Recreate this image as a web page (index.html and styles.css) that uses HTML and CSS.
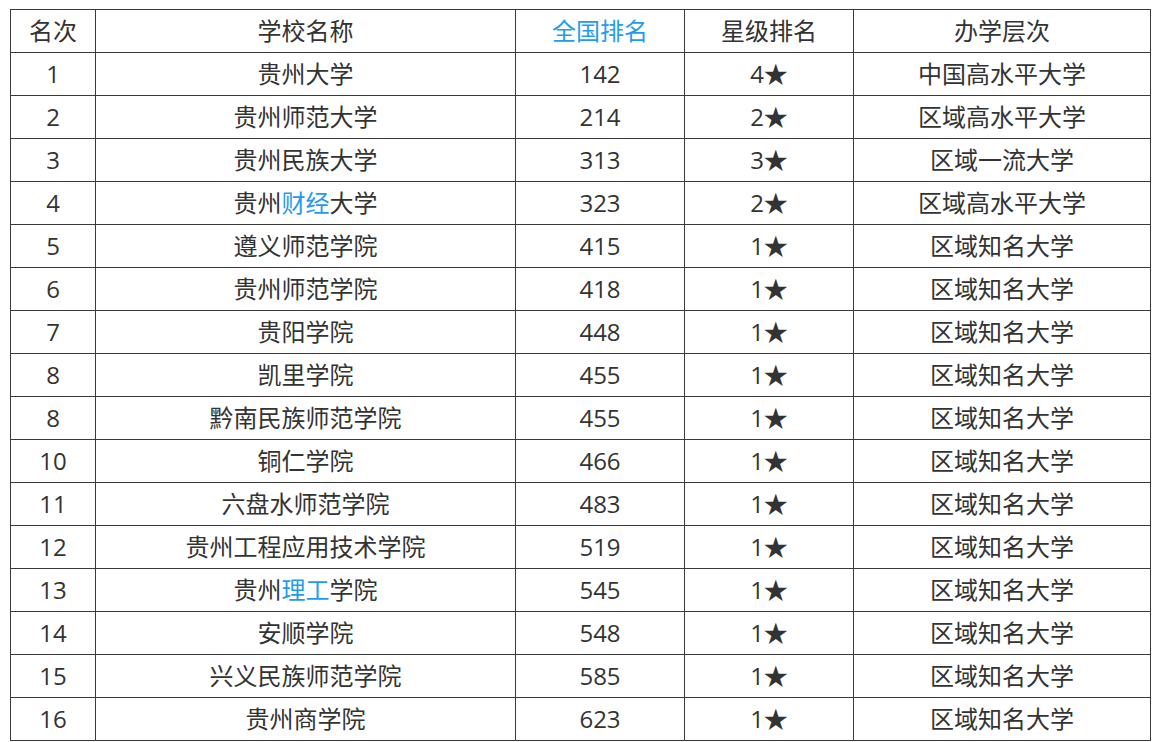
FILE: index.html
```html
<!DOCTYPE html>
<html lang="zh-CN">
<head>
<meta charset="utf-8">
<title>贵州高校排名</title>
<link rel="stylesheet" href="styles.css">
</head>
<body>
<div class="wrap">
<table class="rank">
<colgroup>
<col class="c1"><col class="c2"><col class="c3"><col class="c4"><col class="c5">
</colgroup>
<thead>
<tr><th>名次</th><th>学校名称</th><th class="blue">全国排名</th><th>星级排名</th><th>办学层次</th></tr>
</thead>
<tbody>
<tr><td>1</td><td>贵州大学</td><td>142</td><td>4★</td><td>中国高水平大学</td></tr>
<tr><td>2</td><td>贵州师范大学</td><td>214</td><td>2★</td><td>区域高水平大学</td></tr>
<tr><td>3</td><td>贵州民族大学</td><td>313</td><td>3★</td><td>区域一流大学</td></tr>
<tr><td>4</td><td>贵州<span class="blue">财经</span>大学</td><td>323</td><td>2★</td><td>区域高水平大学</td></tr>
<tr><td>5</td><td>遵义师范学院</td><td>415</td><td>1★</td><td>区域知名大学</td></tr>
<tr><td>6</td><td>贵州师范学院</td><td>418</td><td>1★</td><td>区域知名大学</td></tr>
<tr><td>7</td><td>贵阳学院</td><td>448</td><td>1★</td><td>区域知名大学</td></tr>
<tr><td>8</td><td>凯里学院</td><td>455</td><td>1★</td><td>区域知名大学</td></tr>
<tr><td>8</td><td>黔南民族师范学院</td><td>455</td><td>1★</td><td>区域知名大学</td></tr>
<tr><td>10</td><td>铜仁学院</td><td>466</td><td>1★</td><td>区域知名大学</td></tr>
<tr><td>11</td><td>六盘水师范学院</td><td>483</td><td>1★</td><td>区域知名大学</td></tr>
<tr><td>12</td><td>贵州工程应用技术学院</td><td>519</td><td>1★</td><td>区域知名大学</td></tr>
<tr><td>13</td><td>贵州<span class="blue">理工</span>学院</td><td>545</td><td>1★</td><td>区域知名大学</td></tr>
<tr><td>14</td><td>安顺学院</td><td>548</td><td>1★</td><td>区域知名大学</td></tr>
<tr><td>15</td><td>兴义民族师范学院</td><td>585</td><td>1★</td><td>区域知名大学</td></tr>
<tr><td>16</td><td>贵州商学院</td><td>623</td><td>1★</td><td>区域知名大学</td></tr>
</tbody>
</table>
</div>
</body>
</html>
```

FILE: styles.css
```css
html, body {
  margin: 0;
  padding: 0;
  background: #ffffff;
}
.wrap {
  padding: 9px 0 0 10px;
}
.rank {
  border-collapse: collapse;
  width: 1140px;
  table-layout: fixed;
  font-family: "Open Sans", "Noto Sans CJK SC", sans-serif;
  font-size: 24px;
  color: #333333;
}
.c1 { width: 85px; }
.c2 { width: 420px; }
.c3 { width: 169px; }
.c4 { width: 169px; }
.c5 { width: 297px; }
.rank th, .rank td {
  border: 1px solid #3a3a3a;
  height: 42px;
  padding: 0;
  text-align: center;
  vertical-align: middle;
  font-weight: normal;
  line-height: 42px;
  white-space: nowrap;
}
.blue {
  color: #1f9cef;
}
```
